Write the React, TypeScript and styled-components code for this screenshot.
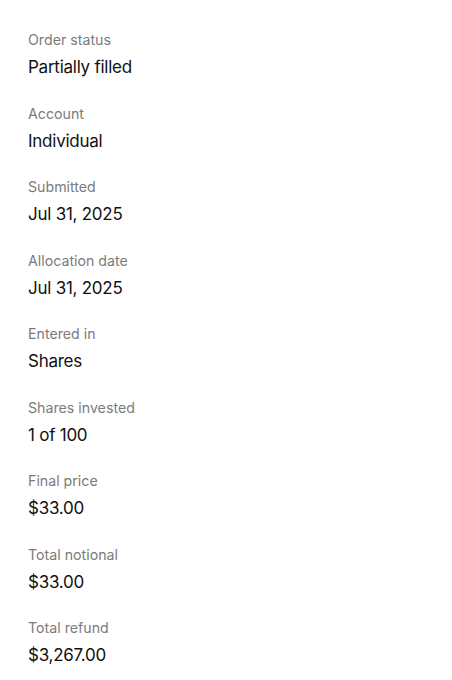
import React from "react";
import styled, { createGlobalStyle } from "styled-components";

const Global = createGlobalStyle`
  html, body { margin: 0; padding: 0; background: #ffffff; }
  body { font-family: Inter, "Noto Sans", sans-serif; -webkit-font-smoothing: antialiased; }
`;

const Page = styled.div`
  display: flex;
  flex-direction: column;
  gap: 24.5px;
  padding: 30px 28px;
`;

const Item = styled.div`
  display: flex;
  flex-direction: column;
  gap: 5px;
`;

const Label = styled.div`
  font-size: 14.2px;
  line-height: 20px;
  color: #7b7b7b;
  font-weight: 400;
`;

const Value = styled.div`
  font-size: 17px;
  line-height: 24px;
  letter-spacing: -0.25px;
  color: #111111;
  font-weight: 400;
`;

const rows: [string, string][] = [
  ["Order status", "Partially filled"],
  ["Account", "Individual"],
  ["Submitted", "Jul 31, 2025"],
  ["Allocation date", "Jul 31, 2025"],
  ["Entered in", "Shares"],
  ["Shares invested", "1 of 100"],
  ["Final price", "$33.00"],
  ["Total notional", "$33.00"],
  ["Total refund", "$3,267.00"],
];

export default function App() {
  return (
    <>
      <Global />
      <Page>
        {rows.map(([l, v]) => (
          <Item key={l}>
            <Label>{l}</Label>
            <Value>{v}</Value>
          </Item>
        ))}
      </Page>
    </>
  );
}
